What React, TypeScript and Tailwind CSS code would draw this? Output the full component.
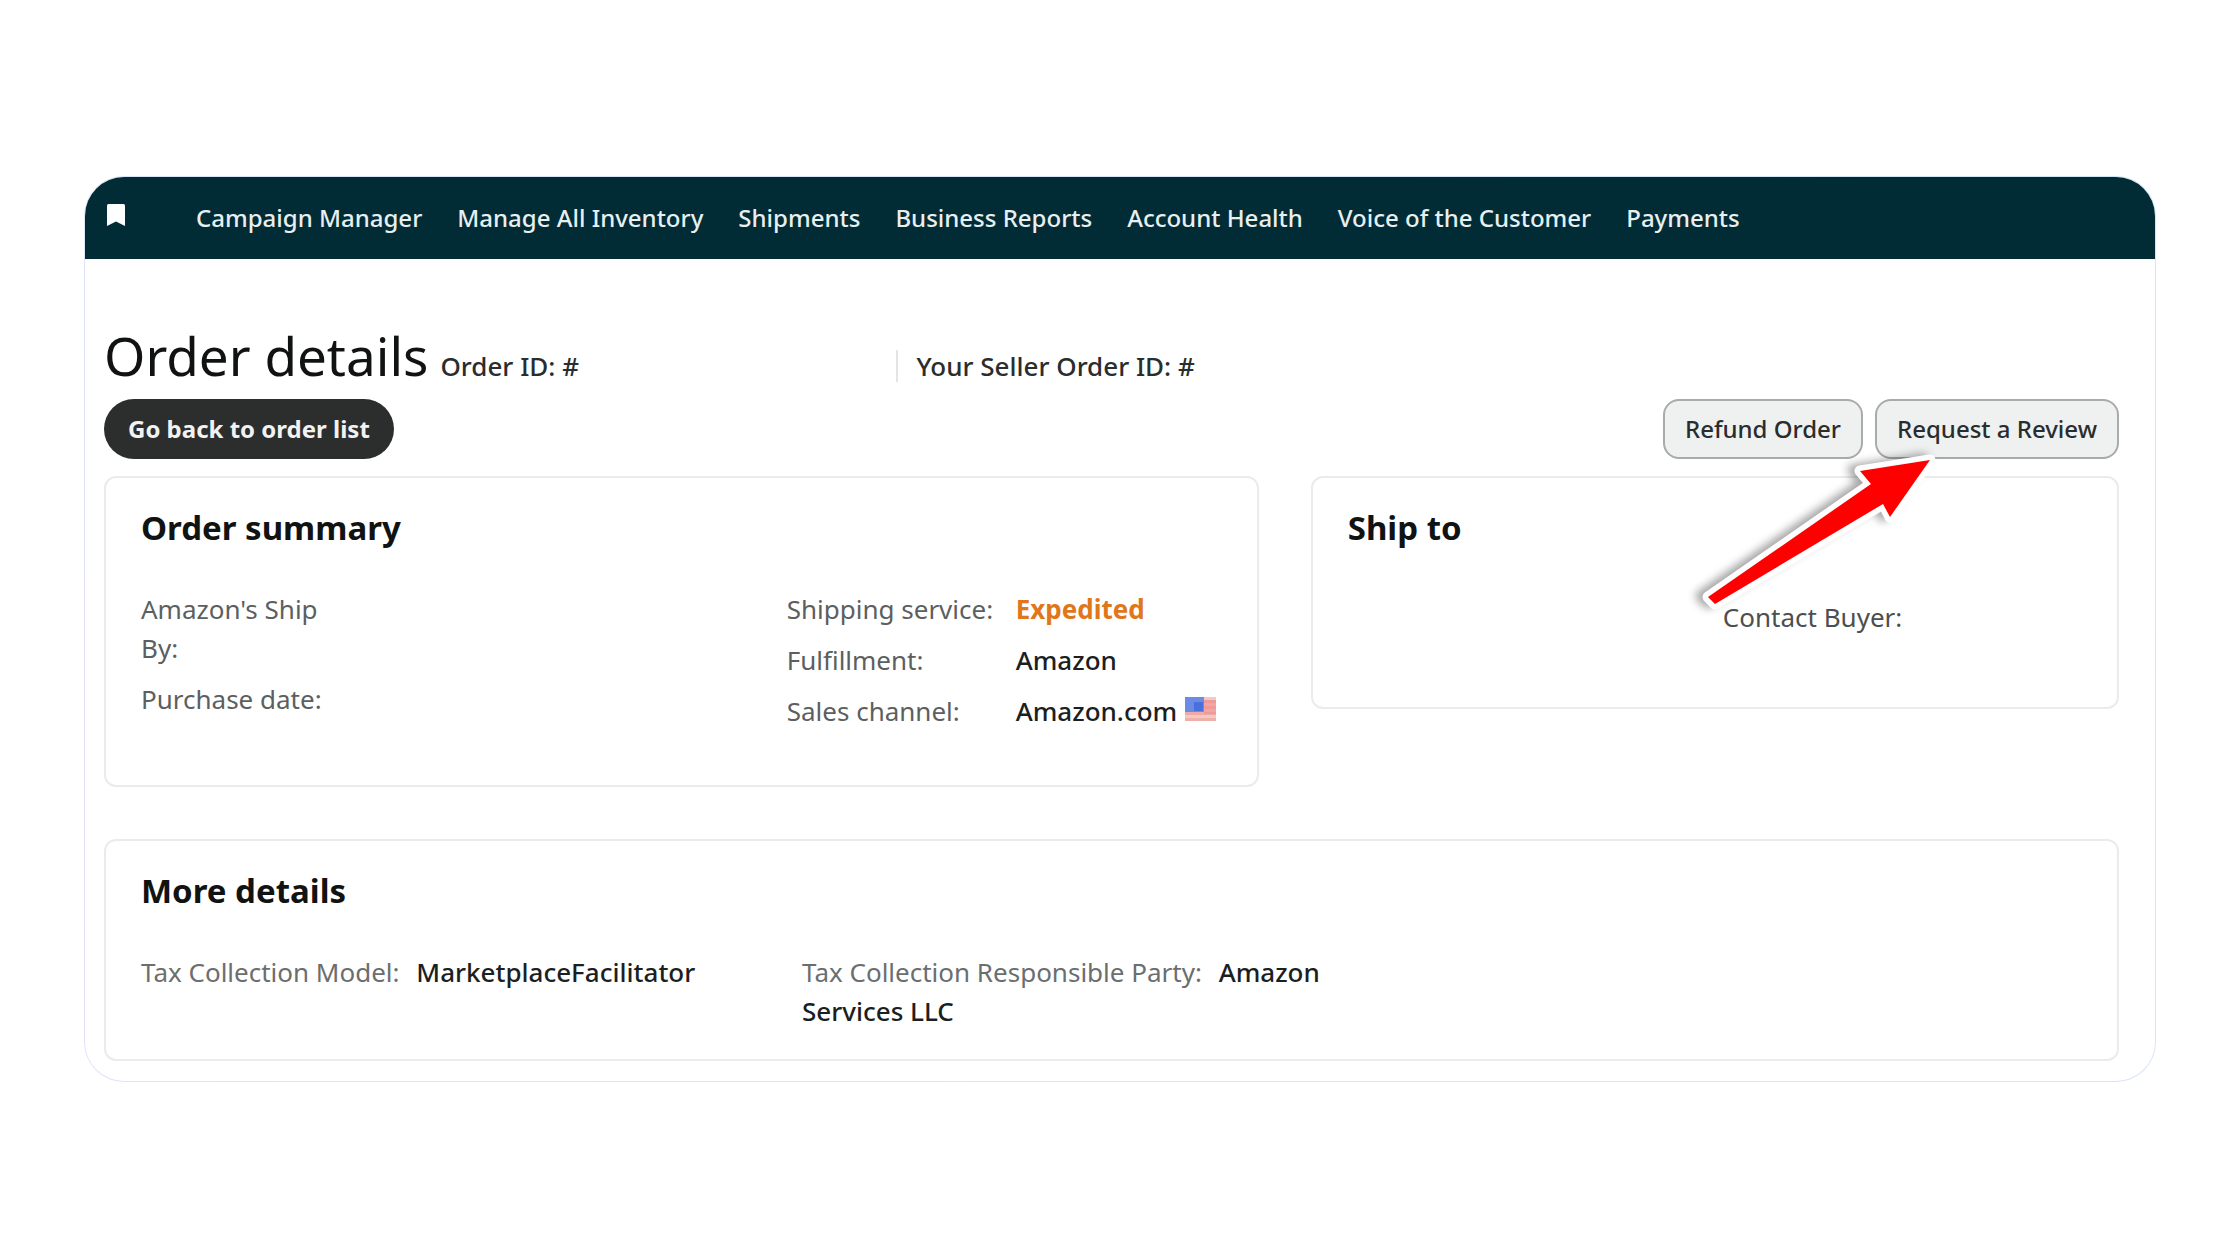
import type { ReactNode } from 'react'

const navLinks = [
  'Campaign Manager',
  'Manage All Inventory',
  'Shipments',
  'Business Reports',
  'Account Health',
  'Voice of the Customer',
  'Payments',
]

function BookmarkIcon() {
  return (
    <svg width="18" height="22" viewBox="0 0 18 22" className="mb-1.5 fill-white" aria-hidden="true">
      <path d="M1.5 0h15A1.5 1.5 0 0 1 18 1.5V22l-9-4.5L0 22V1.5A1.5 1.5 0 0 1 1.5 0Z" />
    </svg>
  )
}

function UsFlag() {
  return (
    <svg width="31" height="24" viewBox="0 0 31 24" className="ml-2 inline-block align-baseline" role="img" aria-label="United States">
      <rect width="31" height="24" fill="#f4c9c2" />
      <g fill="#f0aaa6">
        <rect y="3" width="31" height="3" />
        <rect y="9" width="31" height="3" />
        <rect y="15" width="31" height="3" />
      </g>
      <rect x="19" y="3" width="12" height="14" fill="#ee8f90" opacity="0.6" />
      <rect y="21" width="31" height="3" fill="#eeb0a8" />
      <rect width="19" height="15" fill="#6b8be4" />
      <rect x="9" y="5" width="9" height="9" fill="#4a70dc" />
    </svg>
  )
}

function Arrow() {
  return (
    <svg
      width="260"
      height="180"
      viewBox="0 0 260 180"
      className="pointer-events-none absolute top-[47px] right-[169px] z-10 overflow-visible drop-shadow-[-7px_-1px_4px_rgba(0,0,0,0.35)]"
      aria-hidden="true"
    >
      <path
        d="M240 14 170 25 181 38 18 151 25 158 193 58 200 71Z"
        fill="#ff0000"
        stroke="#ffffff"
        strokeWidth="11"
        strokeLinejoin="round"
        style={{ paintOrder: 'stroke' }}
      />
    </svg>
  )
}

function Card({ title, className = '', children }: { title: string; className?: string; children: ReactNode }) {
  return (
    <section className={`rounded-xl border-2 border-[#ebebeb] px-[35px] pt-7 ${className}`}>
      <h2 className="mb-10 text-[33px] leading-[44px] font-bold text-[#111313]">{title}</h2>
      {children}
    </section>
  )
}

export default function App() {
  return (
    <div className="min-h-screen bg-white px-[84px] py-[176px] font-['Noto_Sans',sans-serif] text-[26px] leading-[39px] text-[#1c1f1f]">
      <div className="rounded-[40px] bg-linear-to-bl from-[#cfe6f2] to-[#e6e0fa] p-px">
        <div className="overflow-hidden rounded-[39px] bg-white">
          <header className="flex h-[82px] items-center bg-[#012b35] pl-[22px] text-2xl font-medium text-[#e8eff0]">
            <BookmarkIcon />
            <nav className="ml-[71px] flex gap-[35px]">
              {navLinks.map((link) => (
                <a key={link} href="#" className="whitespace-nowrap">
                  {link}
                </a>
              ))}
            </nav>
          </header>

          <main className="pt-[61px] pr-9 pb-5 pl-[19px]">
            {/* Title and order ids */}
            <div className="flex items-baseline font-medium text-[#2a2d2d]">
              <h1 className="mr-3 text-[53px] leading-[72px] font-normal whitespace-nowrap text-[#111313]">Order details</h1>
              <span className="w-[456px] leading-8">Order ID: #</span>
              <span className="border-l-2 border-[#e4e4e4] pl-[18px] leading-8">Your Seller Order ID: #</span>
            </div>

            {/* Actions */}
            <div className="relative mt-[7px] flex items-center gap-3 text-2xl font-medium text-[#2a2d2d]">
              <button type="button" className="mr-auto h-[60px] rounded-full bg-[#2c2e2d] px-6 font-bold text-[#f2f2f2]">
                Go back to order list
              </button>
              <button type="button" className="h-[60px] rounded-2xl border-2 border-[#a9abab] bg-[#eff1f1] px-5">
                Refund Order
              </button>
              <button type="button" className="h-[60px] rounded-2xl border-2 border-[#a9abab] bg-[#eff1f1] px-5">
                Request a Review
              </button>
              <Arrow />
            </div>

            <div className="mt-[17px] grid grid-cols-[10fr_7fr] items-start gap-[52px]">
              <Card title="Order summary" className="pb-[54px]">
                <div className="grid grid-cols-[1fr_435px] text-[#5c5f5f]">
                  <dl className="w-[190px] space-y-3">
                    <dt>Amazon's Ship By:</dt>
                    <dt>Purchase date:</dt>
                  </dl>
                  <dl className="grid grid-cols-[229px_1fr] gap-y-3">
                    <dt>Shipping service:</dt>
                    <dd className="font-bold text-[#e0771a]">Expedited</dd>
                    <dt>Fulfillment:</dt>
                    <dd className="font-medium text-[#1c1f1f]">Amazon</dd>
                    <dt>Sales channel:</dt>
                    <dd className="font-medium whitespace-nowrap text-[#1c1f1f]">
                      Amazon.com
                      <UsFlag />
                    </dd>
                  </dl>
                </div>
              </Card>

              <Card title="Ship to" className="pb-[70px]">
                <div className="grid grid-cols-2 gap-4 pt-2 text-[#4c4f4f]">
                  <span className="col-start-2">Contact Buyer:</span>
                </div>
              </Card>
            </div>

            <Card title="More details" className="mt-[52px] pb-7">
              <div className="grid grid-cols-3 gap-[42px]">
                <p>
                  <span className="mr-2.5 text-[#6b6e6e]">Tax Collection Model:</span>{' '}
                  <span className="font-medium">MarketplaceFacilitator</span>
                </p>
                <p>
                  <span className="mr-2.5 text-[#6b6e6e]">Tax Collection Responsible Party:</span>{' '}
                  <span className="font-medium">Amazon Services LLC</span>
                </p>
              </div>
            </Card>
          </main>
        </div>
      </div>
    </div>
  )
}
